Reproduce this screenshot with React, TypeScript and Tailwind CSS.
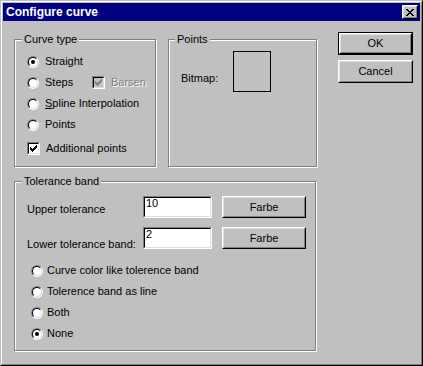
import type { ReactNode } from "react";

function Radio({ checked }: { checked?: boolean }) {
  return (
    <div className="w-[12px] h-[12px] shrink-0 rounded-full border border-t-[#808080] border-l-[#808080] border-r-white border-b-white">
      <div className="w-full h-full rounded-full border border-t-black border-l-black border-r-[#dfdfdf] border-b-[#dfdfdf] bg-white flex items-center justify-center">
        {checked && <div className="w-[4px] h-[4px] rounded-full bg-black" />}
      </div>
    </div>
  );
}

function CheckMark({ color }: { color: string }) {
  const cols = [2, 3, 4, 3, 2, 1, 0];
  return (
    <svg width="7" height="7" viewBox="0 0 7 7" shapeRendering="crispEdges">
      {cols.map((top, x) => (
        <rect key={x} x={x} y={top} width="1" height="3" fill={color} />
      ))}
    </svg>
  );
}

function Checkbox({ checked, disabled }: { checked?: boolean; disabled?: boolean }) {
  return (
    <div className="w-[13px] h-[13px] shrink-0 border border-t-[#808080] border-l-[#808080] border-r-white border-b-white">
      <div
        className={
          "w-full h-full border border-t-black border-l-black border-r-[#dfdfdf] border-b-[#dfdfdf] flex items-center justify-center " +
          (disabled ? "bg-[#c0c0c0]" : "bg-white")
        }
      >
        {checked && <CheckMark color={disabled ? "#808080" : "#000"} />}
      </div>
    </div>
  );
}

function WinButton({ children, isDefault, className }: { children: ReactNode; isDefault?: boolean; className: string }) {
  const face = (
    <div className="w-full h-full border border-t-white border-l-white border-r-black border-b-black">
      <div className="w-full h-full border border-t-[#dfdfdf] border-l-[#dfdfdf] border-r-[#808080] border-b-[#808080] flex items-center justify-center">
        {children}
      </div>
    </div>
  );
  return <div className={className + (isDefault ? " border border-black" : "")}>{face}</div>;
}

function GroupBox({ label, className, labelLeft, children }: { label: string; className: string; labelLeft: string; children: ReactNode }) {
  return (
    <div className={"relative border border-[#808080] shadow-[inset_1px_1px_0_#fff,1px_1px_0_#fff] " + className}>
      <span className={"absolute -top-[7px] px-[2px] bg-[#c0c0c0] leading-[13px] " + labelLeft}>{label}</span>
      {children}
    </div>
  );
}

function TextBox({ value }: { value: string }) {
  return (
    <div className="w-[69px] h-[22px] border border-t-[#808080] border-l-[#808080] border-r-white border-b-white">
      <div className="w-full h-full border border-t-black border-l-black border-r-[#dfdfdf] border-b-[#dfdfdf] bg-white pl-[1px] leading-[11px]">
        {value}
      </div>
    </div>
  );
}

function CloseGlyph() {
  const rows = ["11000011", "01100110", "00111100", "00011000", "00111100", "01100110", "11000011"];
  return (
    <svg width="8" height="7" viewBox="0 0 8 7" shapeRendering="crispEdges">
      {rows.flatMap((r, y) =>
        r.split("").map((c, x) => (c === "1" ? <rect key={`${x}-${y}`} x={x} y={y} width="1" height="1" fill="#000" /> : null))
      )}
    </svg>
  );
}

export default function App() {
  return (
    <div
      className="w-[423px] h-[366px] bg-[#c0c0c0] border border-t-[#c0c0c0] border-l-[#c0c0c0] border-r-black border-b-black text-[11px] leading-[13px] text-black"
      style={{ fontFamily: '"Liberation Sans", Arial, sans-serif' }}
    >
      <div className="h-full border border-t-white border-l-white border-r-[#808080] border-b-[#808080] p-[1px] flex flex-col">
        {/* title bar */}
        <div className="h-[18px] bg-[#000080] flex items-center justify-between pl-[3px] pr-[2px]">
          <span className="text-white font-bold text-[12px] leading-[14px]">Configure curve</span>
          <div className="w-[16px] h-[14px] border border-t-white border-l-white border-r-black border-b-black">
            <div className="w-full h-full bg-[#c0c0c0] border border-t-[#dfdfdf] border-l-[#dfdfdf] border-r-[#808080] border-b-[#808080] flex items-center justify-center">
              <CloseGlyph />
            </div>
          </div>
        </div>

        {/* client area */}
        <div className="flex items-start">
          <div className="ml-[11px] mt-[18px] flex flex-col">
            <div className="flex">
              <GroupBox label="Curve type" labelLeft="left-[7px]" className="w-[142px] h-[128px] pt-[11px] pl-[12px]">
                <div className="h-[21px] flex items-center gap-[6px]">
                  <Radio checked />
                  <span>Straight</span>
                </div>
                <div className="h-[21px] flex items-center">
                  <Radio />
                  <span className="ml-[6px] w-[47px]">Steps</span>
                  <Checkbox checked disabled />
                  <span className="ml-[6px] text-[#808080] [text-shadow:1px_1px_0_#fff]">Barsen</span>
                </div>
                <div className="h-[21px] flex items-center gap-[6px]">
                  <Radio />
                  <span>
                    <u>S</u>pline Interpolation
                  </span>
                </div>
                <div className="h-[21px] flex items-center gap-[6px]">
                  <Radio />
                  <span>Points</span>
                </div>
                <div className="h-[21px] mt-[3px] flex items-center gap-[6px]">
                  <Checkbox checked />
                  <span>Additional points</span>
                </div>
              </GroupBox>

              <GroupBox label="Points" labelLeft="left-[6px]" className="ml-[12px] w-[149px] h-[128px] pt-[11px] pl-[12px]">
                <div className="flex items-start">
                  <span className="w-[52px] mt-[21px]">Bitmap:</span>
                  <div className="w-[38px] h-[41px] border border-black" />
                </div>
              </GroupBox>
            </div>

            <GroupBox label="Tolerance band" labelLeft="left-[7px]" className="mt-[14px] w-[302px] h-[170px] pt-[14px] pl-[12px]">
              <div className="flex items-start">
                <span className="w-[116px] mt-[7px]">Upper tolerance</span>
                <TextBox value="10" />
                <WinButton className="ml-[10px] w-[84px] h-[22px]">Farbe</WinButton>
              </div>
              <div className="flex items-start mt-[9px]">
                <span className="w-[116px] mt-[11px]">Lower tolerance band:</span>
                <TextBox value="2" />
                <WinButton className="ml-[10px] w-[84px] h-[22px]">Farbe</WinButton>
              </div>
              <div className="mt-[9px] pl-[4px] flex flex-col">
                <div className="h-[21px] flex items-center gap-[4px]">
                  <Radio />
                  <span>Curve color like tolerence band</span>
                </div>
                <div className="h-[21px] flex items-center gap-[4px]">
                  <Radio />
                  <span>Tolerence band as line</span>
                </div>
                <div className="h-[21px] flex items-center gap-[4px]">
                  <Radio />
                  <span>Both</span>
                </div>
                <div className="h-[21px] flex items-center gap-[4px]">
                  <Radio checked />
                  <span>None</span>
                </div>
              </div>
            </GroupBox>
          </div>

          <div className="ml-[21px] mt-[11px] flex flex-col gap-[5px]">
            <WinButton isDefault className="w-[75px] h-[23px]">OK</WinButton>
            <WinButton className="w-[75px] h-[23px]">Cancel</WinButton>
          </div>
        </div>
      </div>
    </div>
  );
}
